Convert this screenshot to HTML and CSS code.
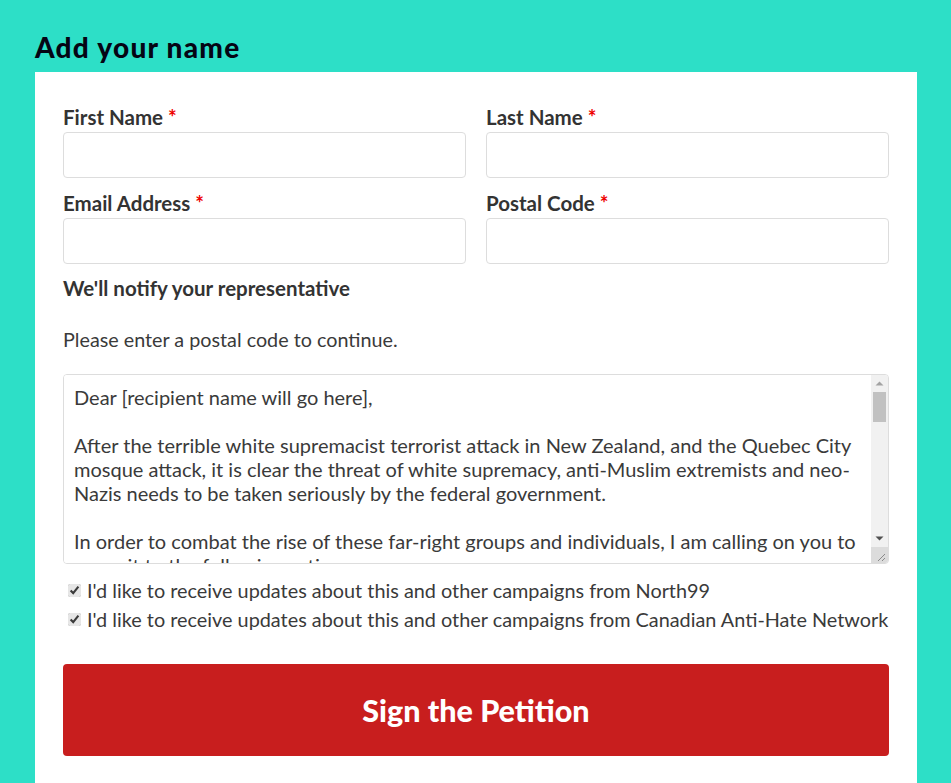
FILE: index.html
```html
<!DOCTYPE html>
<html lang="en">
<head>
<meta charset="utf-8">
<title>Add your name</title>
<link rel="stylesheet" href="styles.css">
</head>
<body>
<div class="page">
  <h2 class="title">Add your name</h2>
  <form class="card">
    <div class="grid">
      <div class="field">
        <label class="label">First Name <span class="req">*</span></label>
        <input class="input" type="text">
      </div>
      <div class="field">
        <label class="label">Last Name <span class="req">*</span></label>
        <input class="input" type="text">
      </div>
      <div class="field">
        <label class="label">Email Address <span class="req">*</span></label>
        <input class="input" type="email">
      </div>
      <div class="field">
        <label class="label">Postal Code <span class="req">*</span></label>
        <input class="input" type="text">
      </div>
    </div>
    <h3 class="notify">We'll notify your representative</h3>
    <p class="hint">Please enter a postal code to continue.</p>
    <div class="letter-box">
      <textarea class="letter">Dear [recipient name will go here],

After the terrible white supremacist terrorist attack in New Zealand, and the Quebec City mosque attack, it is clear the threat of white supremacy, anti-Muslim extremists and neo-Nazis needs to be taken seriously by the federal government.

In order to combat the rise of these far-right groups and individuals, I am calling on you to commit to the following actions:

1. Take action against online hate and extremism.
2. Fund programs that counter hate.
3. Track and report hate crimes.</textarea>
      <div class="scrollbar">
        <div class="sb-btn">
          <svg width="9" height="5" viewBox="0 0 9 5"><path d="M0.5 4.5 L4.5 0.5 L8.5 4.5 Z" fill="#a3a3a3"/></svg>
        </div>
        <div class="sb-track"><div class="sb-thumb"></div></div>
        <div class="sb-btn">
          <svg width="9" height="5" viewBox="0 0 9 5"><path d="M0.5 0.5 L8.5 0.5 L4.5 4.5 Z" fill="#505050"/></svg>
        </div>
        <div class="sb-corner">
          <svg width="16" height="16" viewBox="0 0 16 16"><path d="M14 7 L7 14 M14 11 L11 14" stroke="#8a8a8a" stroke-width="1" fill="none"/></svg>
        </div>
      </div>
    </div>
    <label class="check first"><input type="checkbox" checked><span>I'd like to receive updates about this and other campaigns from North99</span></label>
    <label class="check"><input type="checkbox" checked><span>I'd like to receive updates about this and other campaigns from Canadian Anti-Hate Network</span></label>
    <button type="button" class="submit">Sign the Petition</button>
  </form>
</div>
</body>
</html>
```

FILE: styles.css
```css
html, body {
  margin: 0;
  padding: 0;
  background: #2ddfc7;
  height: 100%;
  overflow: hidden;
}
.page {
  padding: 30px 34px 0 35px;
  font-family: Lato, "Open Sans", sans-serif;
  color: #333;
}
.title {
  margin: 0 0 8px;
  font-family: Lato, sans-serif;
  font-weight: 900;
  font-size: 28px;
  line-height: 34px;
  letter-spacing: 1.25px;
  color: #050514;
}
.card {
  background: #fff;
  padding: 33px 28px 40px;
  min-height: 800px;
  box-sizing: border-box;
}
.grid {
  display: grid;
  grid-template-columns: 1fr 1fr;
  column-gap: 20px;
  row-gap: 13px;
}
.field {
  display: flex;
  flex-direction: column;
}
.label {
  font-size: 20.5px;
  font-weight: 700;
  line-height: 24px;
  color: #333;
  margin-bottom: 3px;
}
.req {
  color: #e00;
}
.input {
  height: 46px;
  box-sizing: border-box;
  border: 1px solid #ddd;
  border-radius: 4px;
  font: inherit;
}
.notify {
  margin: 12px 0 0;
  font-size: 20.5px;
  font-weight: 700;
  line-height: 24px;
  color: #333;
}
.hint {
  margin: 28px 0 0;
  font-size: 19.75px;
  line-height: 24px;
  color: #3a3a3a;
}
.letter-box {
  display: flex;
  height: 190px;
  box-sizing: border-box;
  margin-top: 22px;
  border: 1px solid #ddd;
  border-radius: 4px;
  overflow: hidden;
}
.letter {
  flex: 1;
  min-width: 0;
  height: 100%;
  box-sizing: border-box;
  margin: 0;
  padding: 10px 10px;
  border: none;
  outline: none;
  overflow: hidden;
  resize: none;
  font-family: Lato, sans-serif;
  font-size: 20px;
  line-height: 24px;
  color: #3a3a3a;
  background: #fff;
}
.scrollbar {
  width: 17px;
  display: flex;
  flex-direction: column;
  background: #f1f1f1;
}
.sb-btn {
  height: 17px;
  display: flex;
  align-items: center;
  justify-content: center;
}
.sb-track {
  flex: 1;
  padding: 0 2px;
}
.sb-thumb {
  height: 30px;
  background: #c1c1c1;
}
.sb-corner {
  height: 16px;
  background: #dcdcdc;
}
.sb-corner svg {
  display: block;
}
.check {
  display: flex;
  align-items: center;
  gap: 5px;
  font-size: 19.85px;
  line-height: 29px;
  color: #3a3a3a;
  padding-left: 4px;
  white-space: nowrap;
}
.check.first {
  margin-top: 12px;
}
.check input {
  flex: none;
  margin: 0 1px;
  width: 13px;
  height: 13px;
  accent-color: #e6e6e6;
}
.submit {
  display: block;
  width: 100%;
  height: 92px;
  margin-top: 30px;
  border: none;
  border-radius: 4px;
  background: #c81e1e;
  color: #fff;
  font-family: Lato, sans-serif;
  font-weight: 900;
  font-size: 30.5px;
}
```
